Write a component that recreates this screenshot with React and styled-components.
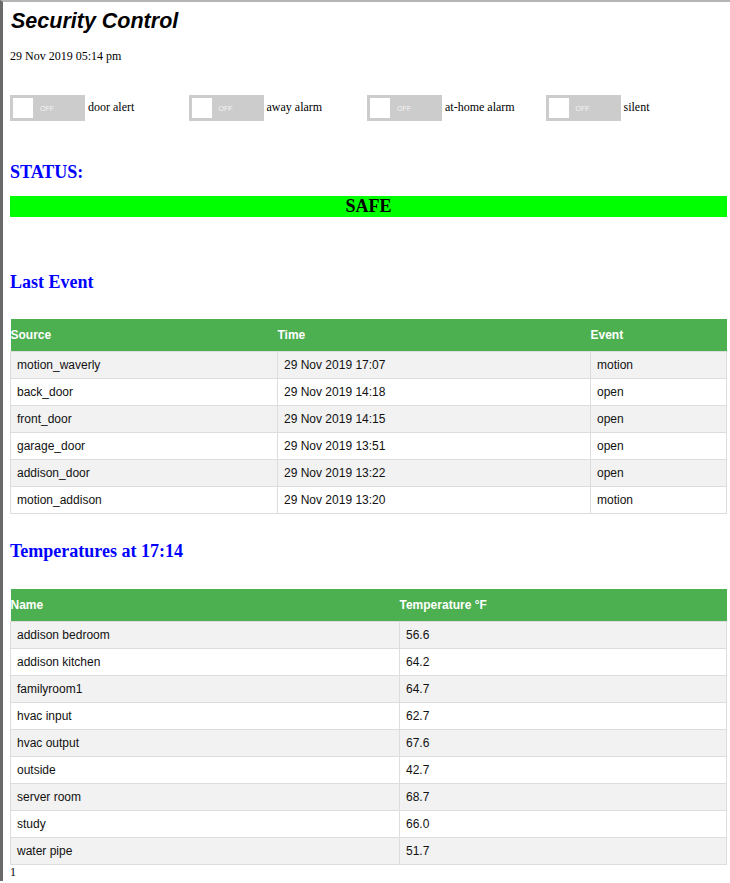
import styled, { createGlobalStyle } from "styled-components";

const Global = createGlobalStyle`
  html, body {
    margin: 0;
    padding: 0;
    background: #ffffff;
  }
  body {
    font-family: "Liberation Serif", "Times New Roman", serif;
    font-size: 12px;
    color: #000;
  }
`;

const events = [
  ["motion_waverly", "29 Nov 2019 17:07", "motion"],
  ["back_door", "29 Nov 2019 14:18", "open"],
  ["front_door", "29 Nov 2019 14:15", "open"],
  ["garage_door", "29 Nov 2019 13:51", "open"],
  ["addison_door", "29 Nov 2019 13:22", "open"],
  ["motion_addison", "29 Nov 2019 13:20", "motion"],
];

const temps = [
  ["addison bedroom", "56.6"],
  ["addison kitchen", "64.2"],
  ["familyroom1", "64.7"],
  ["hvac input", "62.7"],
  ["hvac output", "67.6"],
  ["outside", "42.7"],
  ["server room", "68.7"],
  ["study", "66.0"],
  ["water pipe", "51.7"],
];

const switches = ["door alert", "away alarm", "at-home alarm", "silent"];

function App() {
  return (
    <Page>
      <Global />
      <Title>Security Control</Title>
      <DateLine>29 Nov 2019 05:14 pm</DateLine>
      <Toggles>
        {switches.map((s) => (
          <ToggleItem key={s}>
            <Switch>
              <Knob />
              <OffText>OFF</OffText>
            </Switch>
            <Label>{s}</Label>
          </ToggleItem>
        ))}
      </Toggles>
      <Heading $top={40}>STATUS:</Heading>
      <StatusBar>SAFE</StatusBar>
      <Heading $top={54}>Last Event</Heading>
      <Table $top={26}>
        <colgroup>
          <col style={{ width: 267 }} />
          <col style={{ width: 313 }} />
          <col />
        </colgroup>
        <thead>
          <tr>
            <Th>Source</Th>
            <Th>Time</Th>
            <Th>Event</Th>
          </tr>
        </thead>
        <tbody>
          {events.map((e) => (
            <Tr key={e[0]}>
              {e.map((c, i) => (
                <Td key={i}>{c}</Td>
              ))}
            </Tr>
          ))}
        </tbody>
      </Table>
      <Heading $top={26}>Temperatures at 17:14</Heading>
      <Table $top={27}>
        <colgroup>
          <col style={{ width: 389 }} />
          <col />
        </colgroup>
        <thead>
          <tr>
            <Th>Name</Th>
            <Th>Temperature °F</Th>
          </tr>
        </thead>
        <tbody>
          {temps.map((t) => (
            <Tr key={t[0]}>
              <Td>{t[0]}</Td>
              <Td>{t[1]}</Td>
            </Tr>
          ))}
        </tbody>
      </Table>
      <Footer>1</Footer>
    </Page>
  );
}

const Page = styled.div`
  border-left: 3px solid #6a6a6a;
  border-top: 2px solid #b4b4b4;
  padding: 0 2px 0 7px;
  min-height: 881px;
  box-sizing: border-box;
`;

const Title = styled.h1`
  font-family: "Liberation Sans", Arial, sans-serif;
  font-style: italic;
  font-weight: bold;
  font-size: 21.5px;
  margin: 7px 0 0 1px;
  line-height: 25px;
`;

const DateLine = styled.p`
  margin: 15px 0 0;
  line-height: 14px;
`;

const Toggles = styled.div`
  display: grid;
  grid-template-columns: repeat(4, 1fr);
  margin-top: 32px;
  width: 714px;
`;

const ToggleItem = styled.div`
  display: flex;
  align-items: center;
`;

const Switch = styled.div`
  width: 75px;
  height: 26px;
  background: #cccccc;
  box-sizing: border-box;
  padding: 3px;
  display: flex;
  align-items: center;
`;

const Knob = styled.div`
  width: 20px;
  height: 20px;
  background: #ffffff;
`;

const OffText = styled.span`
  font-family: "Liberation Sans", Arial, sans-serif;
  font-size: 7px;
  color: #f4f4f4;
  margin-left: 7px;
`;

const Label = styled.span`
  margin-left: 3px;
  margin-top: -2px;
`;

const Heading = styled.h3`
  color: #0000ff;
  font-size: 18px;
  font-weight: bold;
  margin: ${(p) => p.$top}px 0 0;
  line-height: 22px;
`;

const StatusBar = styled.div`
  background: #00ff00;
  text-align: center;
  font-weight: bold;
  font-size: 18px;
  line-height: 21px;
  margin-top: 13px;
  width: 717px;
`;

const Table = styled.table`
  border-collapse: collapse;
  width: 717px;
  margin-top: ${(p) => p.$top}px;
  font-family: "Liberation Sans", Arial, sans-serif;
  font-size: 12px;
  table-layout: fixed;
`;

const Th = styled.th`
  background: #4caf50;
  color: #ffffff;
  text-align: left;
  font-weight: bold;
  padding: 9px 1px 9px 0;
  line-height: 14px;
`;

const Tr = styled.tr`
  &:nth-child(odd) {
    background: #f2f2f2;
  }
`;

const Td = styled.td`
  border: 1px solid #dddddd;
  padding: 6px 6px;
  line-height: 14px;
  color: #111;
`;

const Footer = styled.div`
  line-height: 14px;
`;

export default App;
